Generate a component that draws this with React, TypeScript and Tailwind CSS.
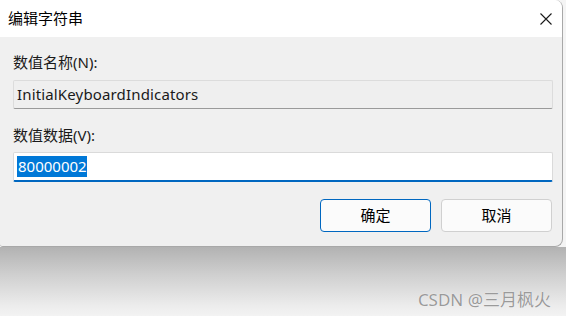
import React from 'react';

const FONT = "font-['Segoe_UI','Noto_Sans','Noto_Sans_CJK_SC',sans-serif]";

const CloseIcon: React.FC = () => (
  <svg width="14" height="14" viewBox="0 0 14 14" fill="none">
    <path d="M1.5 1.5 L12.5 12.5 M12.5 1.5 L1.5 12.5" stroke="#1a1a1a" strokeWidth="1.1" />
  </svg>
);

const EditStringDialog: React.FC = () => {
  return (
    <div className={`w-[566px] h-[316px] bg-[#f4f4f4] flex flex-col ${FONT}`}>
      {/* 对话框 */}
      <div className="w-[563px] h-[247px] flex flex-col bg-[#f0f0f0] rounded-tr-[8px] rounded-br-[8px] rounded-bl-[3px] border-b border-r border-[#a8a8a8] overflow-hidden">
        {/* 标题栏 */}
        <div className="h-[37px] bg-white flex items-center justify-between pl-[8px] pr-[9px] shrink-0">
          <span className="text-[15px] text-black leading-none">编辑字符串</span>
          <CloseIcon />
        </div>

        {/* 内容 */}
        <div className="flex flex-col pl-[13px] pr-[10px] pt-[15px]">
          <label className="text-[15px] text-[#1a1a1a] leading-[20px]">数值名称(N):</label>
          <div className="mt-[8px] w-[540px] h-[29px] bg-[#efefef] border border-[#dcdcdc] border-b-[#9a9a9a] rounded-[2px] flex items-center px-[3px]">
            <span className="text-[15px] text-[#1a1a1a] leading-none tracking-[0.15px]">InitialKeyboardIndicators</span>
          </div>

          <label className="mt-[16px] text-[15px] text-[#1a1a1a] leading-[20px]">数值数据(V):</label>
          <div className="mt-[7px] w-[540px] h-[30px] bg-white border border-[#dadada] border-b-2 border-b-[#0067c0] rounded-[2px] flex items-center px-[3px]">
            <span className="text-[15px] text-white bg-[#0078d7] leading-[21px] pl-px">80000002</span>
          </div>

          <div className="mt-[17px] flex justify-end gap-[10px]">
            <button className="w-[111px] h-[33px] rounded-[4px] bg-[#fbfbfb] border border-[#0067c0] text-[15px] text-black">
              确定
            </button>
            <button className="w-[111px] h-[33px] rounded-[4px] bg-[#fbfbfb] border border-[#d0d0d0] text-[15px] text-black">
              取消
            </button>
          </div>
        </div>
      </div>

      {/* 阴影区域 */}
      <div className="flex-1 bg-[linear-gradient(to_bottom,#b2b2b2,#cfcfcf_40%,#ececec_85%,#f3f3f3)] flex items-end justify-end pr-[15px] pb-[8px]">
        <span className="text-[17px] text-[#9a9a9a] leading-none [text-shadow:0_0_1px_#ffffff]">CSDN @三月枫火</span>
      </div>
    </div>
  );
};

export default function App() {
  return <EditStringDialog />;
}
